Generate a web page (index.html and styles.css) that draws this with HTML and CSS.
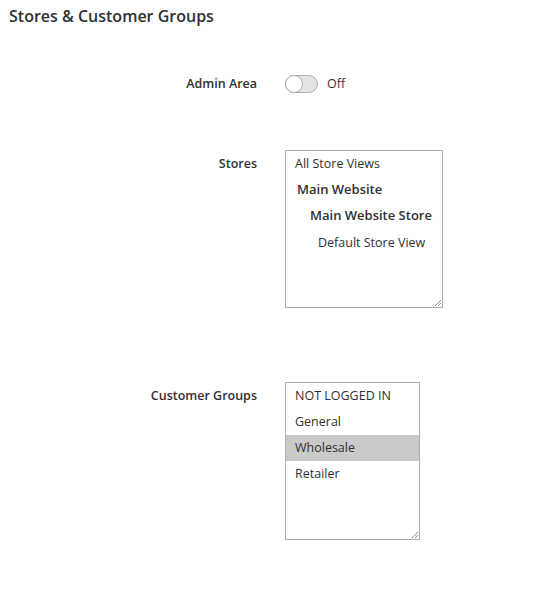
FILE: index.html
```html
<!DOCTYPE html>
<html>
<head>
<meta charset="utf-8">
<link rel="stylesheet" href="styles.css">
</head>
<body>
<div class="page">
  <h2 class="title">Stores &amp; Customer Groups</h2>

  <div class="field field-admin">
    <div class="label">Admin Area</div>
    <div class="control control-switch">
      <span class="switch"><span class="knob"></span></span>
      <span class="switch-text">Off</span>
    </div>
  </div>

  <div class="field field-stores">
    <div class="label label-top">Stores</div>
    <div class="control">
      <div class="multiselect stores">
        <div class="opt lvl0">All Store Views</div>
        <div class="opt lvl1 bold">Main Website</div>
        <div class="opt lvl2 bold">Main Website Store</div>
        <div class="opt lvl3">Default Store View</div>
        <svg class="grip" width="10" height="10" viewBox="0 0 10 10"><path d="M9 3 L3 9 M9 6 L6 9" stroke="#8a8a8a" stroke-width="1" fill="none"/></svg>
      </div>
    </div>
  </div>

  <div class="field field-groups">
    <div class="label label-top">Customer Groups</div>
    <div class="control">
      <div class="multiselect groups">
        <div class="opt">NOT LOGGED IN</div>
        <div class="opt">General</div>
        <div class="opt selected">Wholesale</div>
        <div class="opt">Retailer</div>
        <svg class="grip" width="10" height="10" viewBox="0 0 10 10"><path d="M9 3 L3 9 M9 6 L6 9" stroke="#8a8a8a" stroke-width="1" fill="none"/></svg>
      </div>
    </div>
  </div>
</div>
</body>
</html>
```

FILE: styles.css
```css
html, body {
  margin: 0;
  padding: 0;
  background: #ffffff;
}
body {
  font-family: "Open Sans", "Liberation Sans", sans-serif;
  color: #303030;
  width: 556px;
  height: 602px;
  overflow: hidden;
}
.page {
  padding: 6px 0 0 9px;
}
.title {
  margin: 0;
  font-size: 16px;
  line-height: 20px;
  font-weight: 600;
  color: #303030;
}
.field {
  display: flex;
  align-items: flex-start;
}
.label {
  width: 248px;
  padding-right: 28px;
  text-align: right;
  font-size: 12.5px;
  font-weight: 600;
  line-height: 18px;
  color: #303030;
}
.label-top {
  padding-top: 5px;
}
.field-admin {
  margin-top: 48px;
  align-items: center;
  height: 20px;
}
.control-switch {
  display: flex;
  align-items: center;
}
.switch {
  position: relative;
  display: block;
  width: 31px;
  height: 16px;
  border: 1px solid #adadad;
  border-radius: 10px;
  background: #e3e3e3;
}
.knob {
  position: absolute;
  left: -1px;
  top: -1px;
  width: 16px;
  height: 16px;
  border: 1px solid #adadad;
  border-radius: 50%;
  background: #ffffff;
}
.switch-text {
  margin-left: 9px;
  font-size: 12.5px;
  line-height: 18px;
  color: #303030;
}
.field-stores {
  margin-top: 56px;
}
.field-groups {
  margin-top: 74px;
}
.multiselect {
  position: relative;
  box-sizing: border-box;
  border: 1px solid #adadad;
  background: #ffffff;
  height: 158px;
  font-size: 12.5px;
  color: #303030;
}
.stores {
  width: 158px;
}
.groups {
  width: 135px;
}
.opt {
  height: 26px;
  line-height: 26px;
  padding-left: 9px;
  white-space: nowrap;
}
.stores .lvl0 {
  height: 25px;
  line-height: 25px;
}
.stores .lvl1 {
  height: 26px;
  line-height: 26px;
}
.stores .lvl2 {
  height: 27px;
  line-height: 27px;
}
.stores .lvl3 {
  height: 28px;
  line-height: 28px;
}
.lvl1 { padding-left: 11px; }
.lvl2 { padding-left: 24px; }
.lvl3 { padding-left: 32px; }
.bold {
  font-weight: 600;
  font-size: 13px;
}
.selected {
  background: #cacaca;
}
.grip {
  position: absolute;
  right: 0;
  bottom: 0;
}
```
